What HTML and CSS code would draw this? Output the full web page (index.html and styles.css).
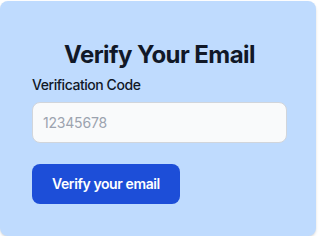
FILE: index.html
```html
<!DOCTYPE html>
<html>
<head>
<meta charset="utf-8">
<link rel="stylesheet" href="styles.css">
</head>
<body>
<div class="card">
  <h1 class="title">Verify Your Email</h1>
  <form class="form">
    <label class="label" for="code">Verification Code</label>
    <input class="input" id="code" type="text" placeholder="12345678">
    <button class="button" type="button">Verify your email</button>
  </form>
</div>
</body>
</html>
```
FILE: styles.css
```css
html, body {
  margin: 0;
  padding: 0;
  background: #ffffff;
}
body {
  font-family: Inter, "Noto Sans", sans-serif;
  padding-top: 1px;
}
.card {
  box-sizing: border-box;
  width: 316px;
  height: 235px;
  background: #bfdbfe;
  border-radius: 8px;
  padding: 38px 29px 31px 32px;
  box-shadow: 0 2px 4px -1px rgba(0,0,0,0.12), 0 1px 2px rgba(0,0,0,0.08);
}
.title {
  margin: 0 0 4px 0;
  font-size: 24px;
  line-height: 32px;
  font-weight: 700;
  color: #111827;
  text-align: center;
  letter-spacing: -0.55px;
}
.form {
  display: flex;
  flex-direction: column;
  align-items: flex-start;
}
.label {
  font-size: 14px;
  line-height: 20px;
  font-weight: 500;
  color: #111827;
  margin-bottom: 7px;
  letter-spacing: -0.45px;
}
.input {
  box-sizing: border-box;
  width: 255px;
  height: 41px;
  padding: 0 10px;
  border: 1px solid #d1d5db;
  border-radius: 8px;
  background: #f9fafb;
  font-family: Inter, "Noto Sans", sans-serif;
  font-size: 14px;
  color: #111827;
  outline: none;
}
.input::placeholder {
  color: #9ca3af;
  letter-spacing: -0.2px;
}
.button {
  margin-top: 21px;
  height: 40px;
  padding: 0 20px;
  border: none;
  border-radius: 8px;
  background: #1d4ed8;
  color: #ffffff;
  font-family: Inter, "Noto Sans", sans-serif;
  font-size: 14px;
  font-weight: 600;
  line-height: 20px;
  letter-spacing: -0.4px;
}
```
